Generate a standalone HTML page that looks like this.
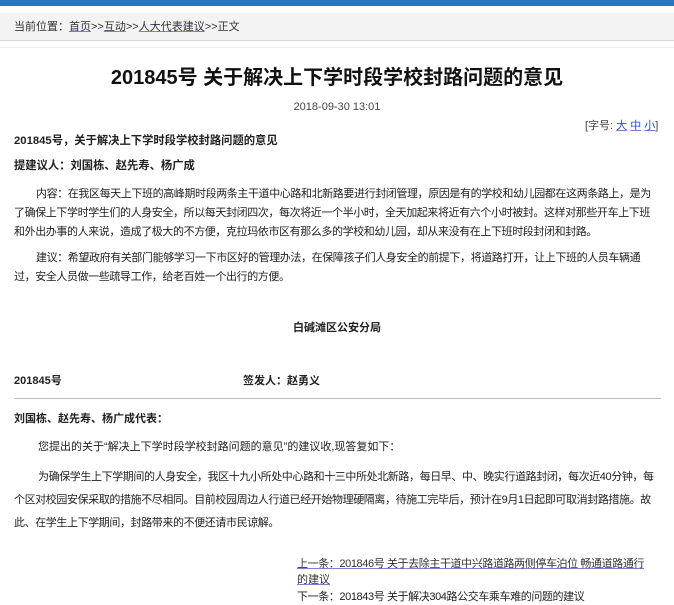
<!DOCTYPE html>
<html><head><meta charset="utf-8"><style>
body{margin:0;width:674px;height:600px;overflow:hidden;background:#fff;font-family:"Liberation Sans","Noto Sans CJK SC",sans-serif;color:#222;font-size:11px;position:relative}
.l{position:absolute;white-space:nowrap;line-height:16px}
.p{letter-spacing:-0.4px}
.b{font-weight:bold}
a{color:#333;text-decoration:underline;text-decoration-color:#8080d0}
</style></head><body>
<div style="position:absolute;left:0;top:0;width:674px;height:6px;background:#2377c4"></div>
<div style="position:absolute;left:0;top:13px;width:674px;height:27px;background:#f3f3f3;border-bottom:1px solid #d8d8d8"></div>
<div style="position:absolute;left:0;top:47px;width:674px;height:1px;background:#eee"></div>
<div class="l" style="left:14px;top:19px;color:#333;font-size:11px">当前位置：<span style="margin-left:0px"></span><a>首页</a>&gt;&gt;<a>互动</a>&gt;&gt;<a>人大代表建议</a>&gt;&gt;正文</div>
<div class="l b" style="left:0;width:674px;text-align:center;top:66px;font-size:20px;line-height:24px;color:#111">201845号 关于解决上下学时段学校封路问题的意见</div>
<div class="l" style="left:0;width:674px;text-align:center;top:99px;font-size:11px;color:#444">2018-09-30 13:01</div>
<div class="l" style="left:585px;top:118px;color:#444">[字号: <a style="color:#2255bb">大</a> <a style="color:#2255bb">中</a> <a style="color:#2255bb">小</a>]</div>
<div class="l b" style="left:14px;top:133px;font-size:11.3px">201845号，关于解决上下学时段学校封路问题的意见</div>
<div class="l b" style="left:14px;top:158px;font-size:11.3px">提建议人：刘国栋、赵先寿、杨广成</div>
<div class="l p" style="left:36px;top:186px">内容：在我区每天上下班的高峰期时段两条主干道中心路和北新路要进行封闭管理，原因是有的学校和幼儿园都在这两条路上，是为</div>
<div class="l p" style="left:14px;top:205px">了确保上下学时学生们的人身安全，所以每天封闭四次，每次将近一个半小时，全天加起来将近有六个小时被封。这样对那些开车上下班</div>
<div class="l p" style="left:14px;top:224px">和外出办事的人来说，造成了极大的不方便，克拉玛依市区有那么多的学校和幼儿园，却从来没有在上下班时段封闭和封路。</div>
<div class="l p" style="left:36px;top:250px">建议：希望政府有关部门能够学习一下市区好的管理办法，在保障孩子们人身安全的前提下，将道路打开，让上下班的人员车辆通</div>
<div class="l p" style="left:14px;top:269px">过，安全人员做一些疏导工作，给老百姓一个出行的方便。</div>
<div class="l b" style="left:0;width:674px;text-align:center;top:320px">白碱滩区公安分局</div>
<div class="l b" style="left:14px;top:373px">201845号</div>
<div class="l b" style="left:243px;top:373px">签发人：赵勇义</div>
<div style="position:absolute;left:14px;top:398px;width:647px;height:1px;background:#bbb"></div>
<div class="l b" style="left:14px;top:411px">刘国栋、赵先寿、杨广成代表：</div>
<div class="l" style="left:38px;top:439px">您提出的关于“解决上下学时段学校封路问题的意见”的建议收,现答复如下：</div>
<div class="l p" style="left:38px;top:469px">为确保学生上下学期间的人身安全，我区十九小所处中心路和十三中所处北新路，每日早、中、晚实行道路封闭，每次近40分钟，每</div>
<div class="l p" style="left:14px;top:492px">个区对校园安保采取的措施不尽相同。目前校园周边人行道已经开始物理硬隔离，待施工完毕后，预计在9月1日起即可取消封路措施。故</div>
<div class="l p" style="left:14px;top:515px">此、在学生上下学期间，封路带来的不便还请市民谅解。</div>
<div class="l p" style="left:297px;top:556px"><a>上一条：201846号 关于去除主干道中兴路道路两侧停车泊位 畅通道路通行</a></div>
<div class="l" style="left:297px;top:572px"><a>的建议</a></div>
<div class="l p" style="left:297px;top:589px">下一条：201843号 关于解决304路公交车乘车难的问题的建议</div>
</body></html>
